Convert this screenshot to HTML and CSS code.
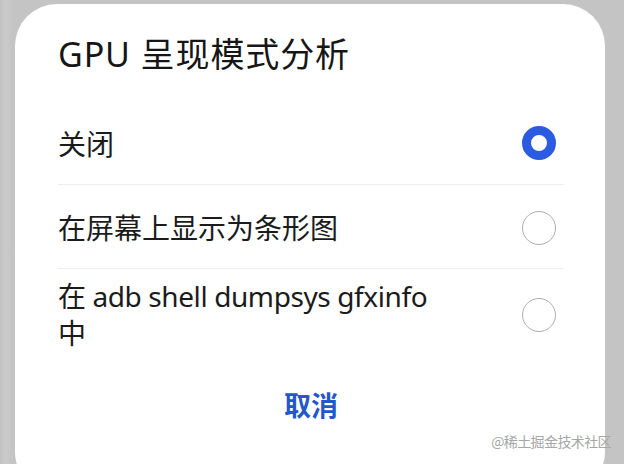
FILE: index.html
```html
<!DOCTYPE html>
<html lang="zh-CN">
<head>
<meta charset="utf-8">
<title>GPU 呈现模式分析</title>
<link rel="stylesheet" href="styles.css">
</head>
<body>
<div class="screen">
  <div class="dialog">
    <h1 class="title">GPU 呈现模式分析</h1>
    <ul class="options">
      <li class="option">
        <span class="label">关闭</span>
        <span class="radio radio-on"></span>
      </li>
      <li class="option">
        <span class="label">在屏幕上显示为条形图</span>
        <span class="radio"></span>
      </li>
      <li class="option option-tall">
        <span class="label label-wrap">在 adb shell dumpsys gfxinfo 中</span>
        <span class="radio"></span>
      </li>
    </ul>
    <div class="actions">
      <button class="btn-cancel" type="button">取消</button>
    </div>
  </div>
  <div class="watermark">@稀土掘金技术社区</div>
</div>
</body>
</html>
```

FILE: styles.css
```css
html, body {
  margin: 0;
  padding: 0;
}
body {
  width: 624px;
  height: 464px;
  overflow: hidden;
  background: #c5c5c5;
  font-family: "Noto Sans", "Noto Sans CJK SC", sans-serif;
  color: #1b1b1b;
}
.screen {
  position: relative;
  width: 624px;
  height: 464px;
  overflow: hidden;
  background: linear-gradient(to right, #c2c2c2 0, #cbcbcb 6px, #c4c4c4 12px, #c4c4c4 100%);
}
.dialog {
  margin: 4px 0 0 15px;
  width: 590px;
  height: 490px;
  box-sizing: border-box;
  background: #ffffff;
  border-radius: 42px;
  padding: 28px 41px 0 43px;
}
.title {
  margin: 0 0 25px 0;
  font-size: 34px;
  line-height: 44px;
  font-weight: 400;
  letter-spacing: 0.9px;
  color: #161616;
}
.options {
  list-style: none;
  margin: 0;
  padding: 0;
}
.option {
  display: flex;
  align-items: center;
  justify-content: space-between;
  height: 84px;
  box-sizing: border-box;
  padding-right: 8px;
  padding-top: 3px;
  border-bottom: 1px solid #eeeeee;
}
.option-tall {
  height: 91px;
  padding-top: 0;
  border-bottom: none;
}
.label {
  font-size: 28px;
  line-height: 37px;
  font-weight: 400;
}
.label-wrap {
  width: 385px;
  letter-spacing: -0.4px;
}
.radio {
  flex: none;
  width: 34px;
  height: 34px;
  box-sizing: border-box;
  border-radius: 50%;
  border: 1.6px solid #aeaeae;
  background: #ffffff;
}
.radio-on {
  border: 9px solid #2a5be0;
  margin-top: -3px;
}
.actions {
  display: flex;
  justify-content: center;
  padding-top: 26px;
}
.btn-cancel {
  border: none;
  background: none;
  padding: 0;
  font-family: "Noto Sans CJK SC", sans-serif;
  font-size: 27px;
  line-height: 38px;
  font-weight: 700;
  color: #2556cc;
}
.watermark {
  position: absolute;
  right: 13px;
  top: 431px;
  font-family: "Noto Sans CJK SC", sans-serif;
  font-size: 14px;
  line-height: 20px;
  letter-spacing: -0.6px;
  color: #a6a6a6;
}
```
